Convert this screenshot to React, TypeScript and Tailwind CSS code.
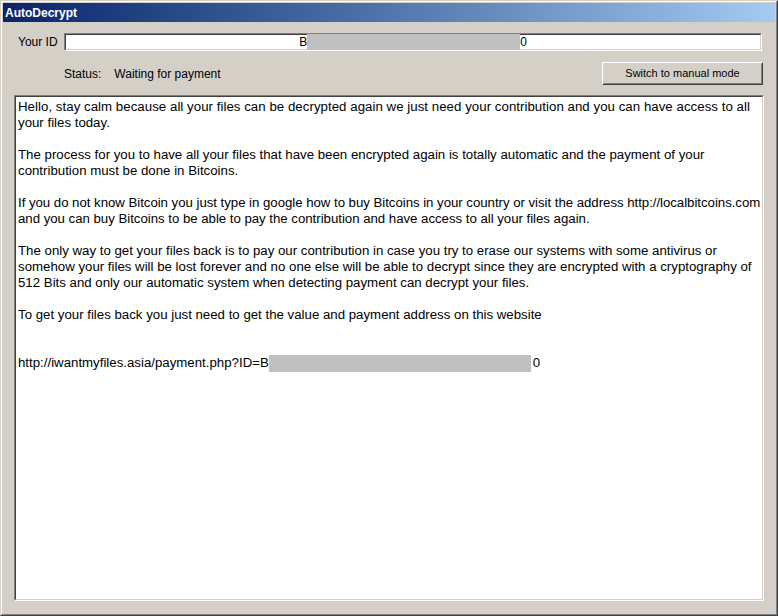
const lines: string[] = [
  "Hello, stay calm because all your files can be decrypted again we just need your contribution and you can have access to all",
  "your files today.",
  "",
  "The process for you to have all your files that have been encrypted again is totally automatic and the payment of your",
  "contribution must be done in Bitcoins.",
  "",
  "If you do not know Bitcoin you just type in google how to buy Bitcoins in your country or visit the address http://localbitcoins.com",
  "and you can buy Bitcoins to be able to pay the contribution and have access to all your files again.",
  "",
  "The only way to get your files back is to pay our contribution in case you try to erase our systems with some antivirus or",
  "somehow your files will be lost forever and no one else will be able to decrypt since they are encrypted with a cryptography of",
  "512 Bits and only our automatic system when detecting payment can decrypt your files.",
  "",
  "To get your files back you just need to get the value and payment address on this website",
  "",
  "",
];

// the original's hinting squeezes / stretches a couple of lines a little
const tracking: Record<number, string> = {
  0: "tracking-[0.04px]",
  6: "tracking-[-0.04px]",
  7: "tracking-[-0.03px]",
};

export default function App() {
  return (
    <div className="w-[778px] h-[616px] bg-[#d4d0c8] border border-t-[#d4d0c8] border-l-[#d4d0c8] border-r-[#404040] border-b-[#404040] font-['Liberation_Sans',Arial,sans-serif] text-black">
      <div className="h-full border border-t-white border-l-white border-r-[#808080] border-b-[#808080] p-px flex flex-col">
        {/* title bar */}
        <div className="h-[19px] shrink-0 bg-linear-to-r from-[#0a246a] to-[#a6caf0] flex items-center px-[2px]">
          <span className="text-white font-bold text-[12px] leading-none">AutoDecrypt</span>
        </div>

        {/* id row */}
        <div className="mt-[11px] flex items-center h-[18px]">
          <span className="w-[61px] pl-[15px] text-[12px]">Your ID</span>
          <div className="w-[698px] h-[18px] bg-white border border-t-[#808080] border-l-[#808080] border-r-white border-b-white">
            <div className="h-full border border-t-[#404040] border-l-[#404040] border-r-[#d4d0c8] border-b-[#d4d0c8] flex items-center justify-center text-[12px]">
              <span>B</span>
              <span className="inline-block w-[213px] h-[16px] bg-[#c0c0c0]" />
              <span>0</span>
            </div>
          </div>
        </div>

        {/* status row */}
        <div className="mt-[11px] flex items-center h-[23px]">
          <span className="ml-[61px] text-[12px]">Status:</span>
          <span className="ml-[13px] text-[12px]">Waiting for payment</span>
          <button className="ml-auto mr-[12px] w-[161px] h-[23px] bg-[#d4d0c8] border border-t-white border-l-white border-r-[#404040] border-b-[#404040] text-[11px]">
            <div className="h-full border border-t-[#d4d0c8] border-l-[#d4d0c8] border-r-[#808080] border-b-[#808080] flex items-center justify-center">
              Switch to manual mode
            </div>
          </button>
        </div>

        {/* message box */}
        <div className="mt-[10px] mx-[11px] h-[506px] bg-white border border-t-[#808080] border-l-[#808080] border-r-white border-b-white">
          <div className="h-full border border-t-[#404040] border-l-[#404040] border-r-[#d4d0c8] border-b-[#d4d0c8] px-[2px] pt-[2px] text-[13.25px] leading-[16px]">
            {lines.map((l, i) => (
              <div key={i} className={`h-[16px] whitespace-nowrap ${tracking[i] ?? ""}`}>
                {l}
              </div>
            ))}
            <div className="h-[16px] whitespace-nowrap flex items-center">
              <span>http://iwantmyfiles.asia/payment.php?ID=B</span>
              <span className="inline-block w-[262px] h-[17px] bg-[#c0c0c0]" />
              <span className="ml-[2px]">0</span>
            </div>
          </div>
        </div>
      </div>
    </div>
  );
}
